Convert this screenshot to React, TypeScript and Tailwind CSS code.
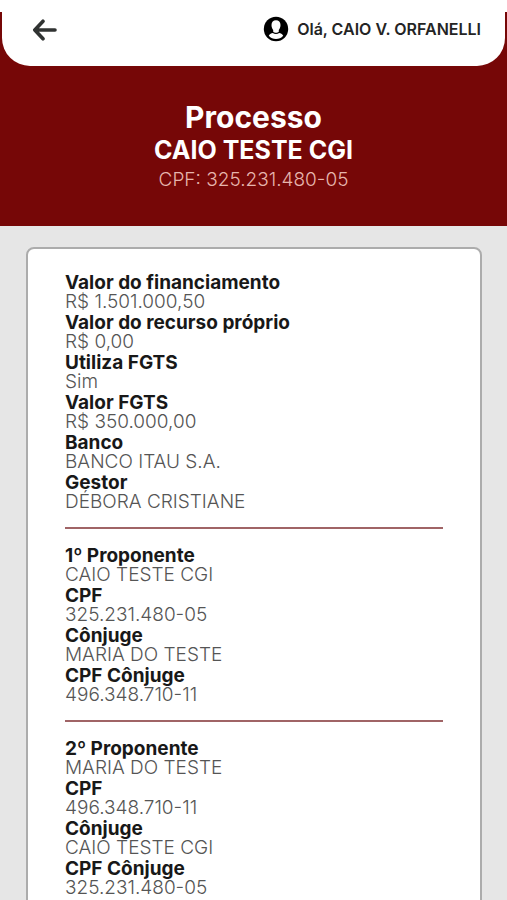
interface Field {
  label: string;
  value: string;
}

const sections: Field[][] = [
  [
    { label: 'Valor do financiamento', value: 'R$ 1.501.000,50' },
    { label: 'Valor do recurso próprio', value: 'R$ 0,00' },
    { label: 'Utiliza FGTS', value: 'Sim' },
    { label: 'Valor FGTS', value: 'R$ 350.000,00' },
    { label: 'Banco', value: 'BANCO ITAU S.A.' },
    { label: 'Gestor', value: 'DÉBORA CRISTIANE' },
  ],
  [
    { label: '1º Proponente', value: 'CAIO TESTE CGI' },
    { label: 'CPF', value: '325.231.480-05' },
    { label: 'Cônjuge', value: 'MARIA DO TESTE' },
    { label: 'CPF Cônjuge', value: '496.348.710-11' },
  ],
  [
    { label: '2º Proponente', value: 'MARIA DO TESTE' },
    { label: 'CPF', value: '496.348.710-11' },
    { label: 'Cônjuge', value: 'CAIO TESTE CGI' },
    { label: 'CPF Cônjuge', value: '325.231.480-05' },
  ],
];

function BackIcon() {
  return (
    <svg width="26" height="22" viewBox="0 0 26 22" fill="none" stroke="#303332" strokeWidth="3.6" strokeLinecap="round" strokeLinejoin="round" aria-hidden="true">
      <path d="M11 2.200 2.800 11l8.200 8.800M3.500 11h19.500" />
    </svg>
  );
}

function UserIcon() {
  return (
    <svg width="26" height="26" viewBox="0 0 26 26" aria-hidden="true">
      <circle cx="13" cy="13" r="12.2" fill="#000" />
      <path d="M13 4.200c-2.800 0-4.500 2-4.500 4.800 0 2 .7 3.700 1.700 4.900v1.800c.8.800 1.700 1.100 2.800 1.100s2-.3 2.800-1.100v-1.800c1-1.200 1.700-2.900 1.700-4.900 0-2.800-1.700-4.800-4.500-4.800z" fill="#fff" />
      <path d="M5.800 19.700c1-1.500 2.500-2.300 4-2.600 1 .6 2 .9 3.200.9s2.200-.3 3.200-.9c1.500.3 3 1.100 4 2.600-1.800 2.100-4.400 3.300-7.200 3.300s-5.400-1.200-7.200-3.300z" fill="#fff" />
    </svg>
  );
}

function Header() {
  return (
    <header className="bg-[#760707]">
      <div className="h-3 bg-white" />
      <div className="mx-0.5 flex h-[54px] items-start justify-between rounded-b-[28px] bg-white pl-[30px] pr-6">
        <button type="button" aria-label="Voltar" className="mt-[7px]">
          <BackIcon />
        </button>
        <div className="mt-1 flex items-center gap-2">
          <UserIcon />
          <span className="text-[16px] leading-5 font-semibold text-[#242424]">Olá, CAIO V. ORFANELLI</span>
        </div>
      </div>
      <div className="pt-[35px] pb-[33px] text-center text-white">
        <h1 className="text-[30px] leading-8 font-bold">Processo</h1>
        <p className="text-[25px] leading-[34px] font-bold">CAIO TESTE CGI</p>
        <p className="text-[19px] leading-[26px] font-light text-[#e6b5ad]">CPF: 325.231.480-05</p>
      </div>
    </header>
  );
}

export default function App() {
  return (
    <div className="min-h-screen bg-[#e6e6e6] font-['Inter',sans-serif]">
      <Header />
      <main className="pt-[21px] pr-[25px] pb-6 pl-[26px]">
        <div className="rounded-lg border-2 border-[#acacac] bg-white px-[37px] py-[7px]">
          {sections.map((fields, index) => (
            <div key={index}>
              {index > 0 && <hr className="border-t-2 border-[#a06466]" />}
              <dl className="pt-[17px] pb-3.5">
                {fields.map((field) => (
                  <div key={field.label} className="h-10">
                    <dt className="text-[19px] leading-5 font-bold text-[#181818]">{field.label}</dt>
                    <dd className="text-[19px] leading-[18px] font-light text-[#555]">{field.value}</dd>
                  </div>
                ))}
              </dl>
            </div>
          ))}
        </div>
      </main>
    </div>
  );
}
